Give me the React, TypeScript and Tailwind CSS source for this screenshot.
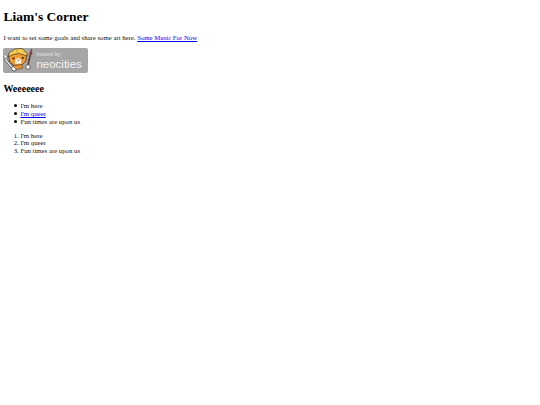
export default function App() {
  return (
    <div className="min-h-[405px] bg-white px-[3.4px] py-[9px] text-[#111] font-['Liberation_Serif',serif] text-[6.75px] leading-[7.6px]">
      <h1 className="text-[13.5px] leading-[15.5px] font-bold mb-[9px] text-black">Liam's Corner</h1>
      <p className="mb-[6.7px]">
        I want to set some goals and share some art here.{' '}
        <a href="#" className="text-[#0000ee] underline">Some Music For Now</a>
      </p>
      <div className="relative w-[85px] h-[25px] rounded-[2px] bg-[#a6a6a6] font-['Liberation_Sans',sans-serif] text-white">
        <svg viewBox="0 0 32 25" className="absolute left-0 top-0 w-[32px] h-[25px]">
          {/* wrench */}
          <path d="M1.5 10 L11 22" stroke="#4a4a4a" strokeWidth="2.6" />
          <path d="M1.5 10 L11 22" stroke="#f2f2f2" strokeWidth="1.3" />
          <circle cx="11" cy="20.5" r="2.6" fill="#f4f4f4" stroke="#4a4a4a" strokeWidth="0.8" />
          <path d="M0.5 8 L2 11 L4.5 9.5 L3.5 7" fill="#eee" stroke="#4a4a4a" strokeWidth="0.6" />
          {/* paint brush */}
          <path d="M27.5 6 L25 17" stroke="#5a3526" strokeWidth="1.5" />
          <path d="M28.6 0.8 L29 6.5 L26.5 6 Z" fill="#a8324a" stroke="#5a3526" strokeWidth="0.4" />
          <circle cx="25" cy="19" r="2.3" fill="#f4f4f4" stroke="#4a4a4a" strokeWidth="0.8" />
          {/* cat head */}
          <path d="M5.5 7 L15 3 L23.5 6 L23 13 L19 17 L11 17.5 L6.5 14 Z" fill="#ee9a35" stroke="#4a3320" strokeWidth="0.8" />
          {/* hat */}
          <path d="M5 9 L6 5 L12 1 L19 0.4 L24 5.5 L24.5 8 L16 5.5 L10 6.5 Z" fill="#f5cf55" stroke="#4a3320" strokeWidth="0.7" />
          <path d="M13 1 L15 5.5" stroke="#c9952c" strokeWidth="0.8" />
          {/* muzzle and eyes */}
          <path d="M12 12 L15 9.5 L18 12 L18.5 15.5 L12 16 Z" fill="#fdf0da" />
          <circle cx="10.5" cy="10.5" r="1" fill="#2c1c10" />
          <circle cx="19.8" cy="10" r="1" fill="#2c1c10" />
          <path d="M14.2 11.8 L16 11.8 L15.1 13 Z" fill="#6b2c20" />
          {/* body */}
          <path d="M10 17.5 L19 16.8 L20 20 L13 21.5 Z" fill="#e8953a" stroke="#4a3320" strokeWidth="0.5" />
        </svg>
        <div className="absolute left-[33px] top-[4px] text-[5.5px] leading-[5px] text-[#e2e2e2] whitespace-nowrap">hosted by,</div>
        <div className="absolute left-[33px] top-[11px] text-[11.5px] leading-[11px] text-[#f4f4f4] whitespace-nowrap">neocities</div>
      </div>
      <h2 className="text-[10px] leading-[11.6px] font-bold mt-[10px] mb-[8px] text-black">Weeeeeee</h2>
      <ul className="pl-[17px] mb-[6.7px]">
        <li className="relative before:absolute before:left-[-6px] before:top-[2px] before:w-[3px] before:h-[3px] before:rounded-full before:bg-black">I'm here</li>
        <li className="relative before:absolute before:left-[-6px] before:top-[2px] before:w-[3px] before:h-[3px] before:rounded-full before:bg-black"><a href="#" className="text-[#0000ee] underline">I'm queer</a></li>
        <li className="relative before:absolute before:left-[-6px] before:top-[2px] before:w-[3px] before:h-[3px] before:rounded-full before:bg-black">Fun times are upon us</li>
      </ul>
      <ol className="list-decimal pl-[17px]">
        <li>I'm here</li>
        <li>I'm queer</li>
        <li>Fun times are upon us</li>
      </ol>
    </div>
  )
}
